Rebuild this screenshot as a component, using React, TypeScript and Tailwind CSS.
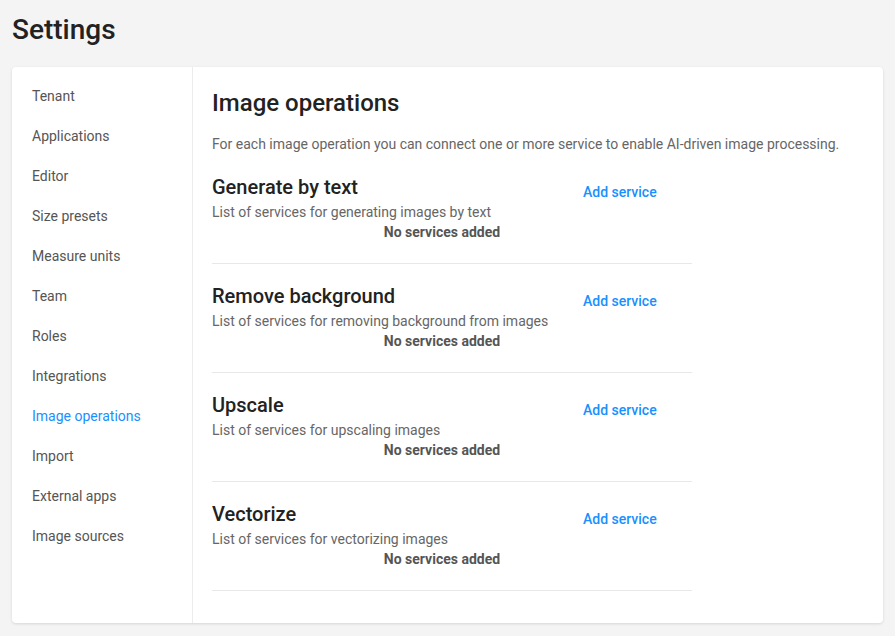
import React from "react";

const nav = [
  "Tenant",
  "Applications",
  "Editor",
  "Size presets",
  "Measure units",
  "Team",
  "Roles",
  "Integrations",
  "Image operations",
  "Import",
  "External apps",
  "Image sources",
];

const sections = [
  { title: "Generate by text", desc: "List of services for generating images by text" },
  { title: "Remove background", desc: "List of services for removing background from images" },
  { title: "Upscale", desc: "List of services for upscaling images" },
  { title: "Vectorize", desc: "List of services for vectorizing images" },
];

export default function App() {
  return (
    <div
      className="min-h-[636px] bg-[#f4f4f4] px-3 pb-[13px] pt-[12px]"
      style={{ fontFamily: "Roboto, 'Liberation Sans', sans-serif" }}
    >
      <h1 className="text-[28px] leading-[36px] font-medium text-[#222]">Settings</h1>
      <div className="mt-[19px] flex h-[556px] rounded-[4px] bg-white shadow-[0_1px_3px_rgba(0,0,0,0.12)]">
        <div className="w-[181px] shrink-0 border-r border-[#ececec] pl-5 pt-[9px]">
          {nav.map((n) => (
            <div
              key={n}
              className={`flex h-10 items-center text-[14px] ${
                n === "Image operations" ? "text-[#1890ff]" : "text-[#555]"
              }`}
            >
              {n}
            </div>
          ))}
        </div>
        <div className="flex-1 pl-[19px] pt-5">
          <h2 className="text-[24px] leading-[32px] font-medium text-[#222]">Image operations</h2>
          <p className="mb-px mt-[15px] text-[14px] leading-5 text-[#666]">
            For each image operation you can connect one or more service to enable AI-driven image processing.
          </p>
          <div className="w-[480px]">
            {sections.map((s) => (
              <div key={s.title} className="border-b border-[#e8e8e8] pb-[21px] pt-[19px]">
                <div className="flex">
                  <div className="w-[371px]">
                    <div className="text-[20px] leading-[26px] font-medium text-[#222]">{s.title}</div>
                    <div className="mt-[2px] text-[14px] leading-5 text-[#666]">{s.desc}</div>
                  </div>
                  <div className="pt-[8px] text-[14px] leading-5 font-medium text-[#1890ff]">Add service</div>
                </div>
                <div className="pr-5 text-center text-[14px] leading-5 font-bold text-[#555]">
                  No services added
                </div>
              </div>
            ))}
          </div>
        </div>
      </div>
    </div>
  );
}
